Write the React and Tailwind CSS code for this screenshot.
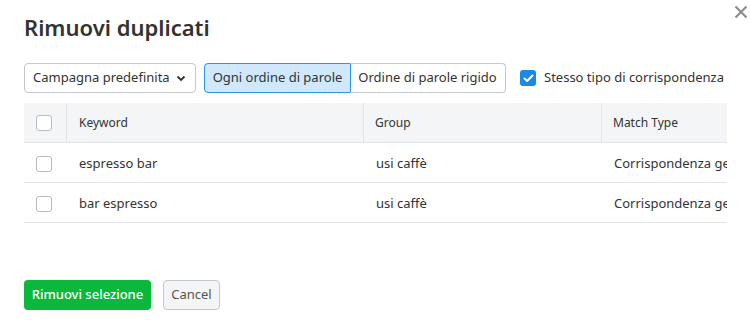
import React from "react";

const Box = ({ checked }) =>
  checked ? (
    <span className="flex h-4 w-4 items-center justify-center rounded-[3px] bg-[#1a8ae5]">
      <svg width="11" height="9" viewBox="0 0 11 9" fill="none">
        <path d="M1.5 4.5 L4.2 7 L9.5 1.5" stroke="white" strokeWidth="2" strokeLinecap="round" strokeLinejoin="round" />
      </svg>
    </span>
  ) : (
    <span className="block h-4 w-4 rounded-[3px] border border-[#b8bcc4] bg-white" />
  );

export default function App() {
  const rows = [
    ["espresso bar", "usi caffè", "Corrispondenza generica"],
    ["bar espresso", "usi caffè", "Corrispondenza generica"],
  ];
  return (
    <div
      className="relative h-[321px] w-[750px] overflow-hidden bg-white pl-[24px] text-[#333333]"
      style={{ fontFamily: '"Noto Sans", sans-serif' }}
    >
      <svg className="absolute right-[2px] top-[5px]" width="14" height="14" viewBox="0 0 14 14">
        <path d="M1.5 1.5 L12.5 12.5 M12.5 1.5 L1.5 12.5" stroke="#8a8d93" strokeWidth="2.2" />
      </svg>
      <h1 className="pt-[12px] text-[22px] font-semibold leading-[30px] text-[#333]">Rimuovi duplicati</h1>
      <div className="mt-[21px] flex h-[30px] items-center text-[13px]">
        <div className="flex h-[30px] w-[172px] items-center justify-between rounded-[4px] border border-[#c4c7cf] pl-[8px] pr-[9px]">
          <span>Campagna predefinita</span>
          <svg width="10" height="7" viewBox="0 0 10 7">
            <path d="M1.5 1.5 L5 5 L8.5 1.5" stroke="#333" strokeWidth="1.8" fill="none" />
          </svg>
        </div>
        <div className="ml-[8px] flex h-[30px]">
          <div className="flex h-[30px] w-[147px] items-center justify-center rounded-l-[4px] border border-[#2b95e6] bg-[#cfe8fb]">
            Ogni ordine di parole
          </div>
          <div className="-ml-px flex h-[30px] w-[156px] items-center justify-center rounded-r-[4px] border border-l-0 border-[#c4c7cf]">
            Ordine di parole rigido
          </div>
        </div>
        <div className="ml-[14px] flex items-center gap-[8px]">
          <Box checked />
          <span>Stesso tipo di corrispondenza</span>
        </div>
      </div>
      <div className="mt-[10px] w-[703px] overflow-hidden text-[13px]">
        <div className="w-[820px]">
          <div className="flex h-[40px] items-center border-b border-[#e3e5e8] bg-[#f4f5f6] text-[12px]">
            <div className="flex h-full w-[43px] items-center border-r border-[#e3e5e8] pl-[12px]">
              <Box />
            </div>
            <div className="flex h-full w-[297px] items-center border-r border-[#e3e5e8] pl-[12px]">Keyword</div>
            <div className="flex h-full w-[238px] items-center border-r border-[#e3e5e8] pl-[11px]">Group</div>
            <div className="flex h-full flex-1 items-center pl-[11px]">Match Type</div>
          </div>
          {rows.map((r, i) => (
            <div key={i} className="flex h-[40px] items-center border-b border-[#e3e5e8] pt-[2px]">
              <div className="flex w-[43px] items-center pl-[12px]">
                <Box />
              </div>
              <div className="w-[297px] pl-[12px]">{r[0]}</div>
              <div className="w-[238px] pl-[12px]">{r[1]}</div>
              <div className="flex-1 whitespace-nowrap pl-[12px]">{r[2]}</div>
            </div>
          ))}
        </div>
      </div>
      <div className="mt-[57px] flex gap-[12px] text-[13px]">
        <button className="h-[30px] w-[127px] rounded-[4px] bg-[#0bb83b] font-medium text-white">Rimuovi selezione</button>
        <button className="h-[30px] w-[57px] rounded-[4px] border border-[#c4c7cf] bg-[#f4f5f6] text-[#555]">Cancel</button>
      </div>
    </div>
  );
}
